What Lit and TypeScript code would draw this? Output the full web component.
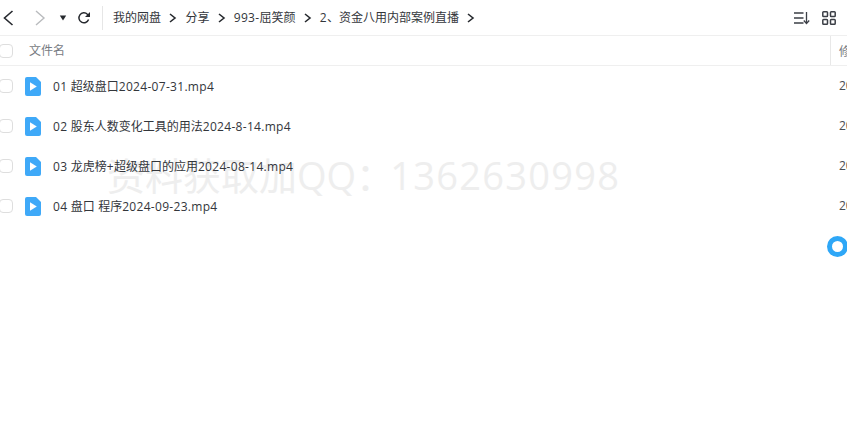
import { LitElement, html, css, svg } from "lit";
import { customElement } from "lit/decorators.js";

const FILES = [
  "01 超级盘口2024-07-31.mp4",
  "02 股东人数变化工具的用法2024-8-14.mp4",
  "03 龙虎榜+超级盘口的应用2024-08-14.mp4",
  "04 盘口 程序2024-09-23.mp4",
];
const CRUMBS = ["我的网盘", "分享", "993-屈笑颜", "2、资金八用内部案例直播"];

const chevron = svg`<svg class="crumb-arrow" width="10" height="10" viewBox="0 0 10 10"><path d="M2 1l5 4-5 4" fill="none" stroke="#26292e" stroke-width="1.6"/></svg>`;

/** Latin runs are a little wider than the stock font; wrap them so only they get tracking. */
const spaced = (text: string) =>
  text
    .split(/([\x20-\x7e]+)/)
    .filter(Boolean)
    .map((part) =>
      /^[\x20-\x7e]/.test(part) ? html`<span class="latin">${part}</span>` : part
    );

@customElement("app-root")
export class AppRoot extends LitElement {
  static styles = css`
    :host {
      display: block;
      position: relative;
      width: 847px;
      height: 424px;
      overflow: hidden;
      background: #fff;
      font-family: "Open Sans", "Noto Sans CJK SC", sans-serif;
      font-size: 12px;
      color: #33363b;
    }
    .latin { letter-spacing: 0.3px; white-space: pre; }
    .content { position: relative; z-index: 1; }
    .toolbar {
      display: flex;
      align-items: center;
      height: 35px;
      border-bottom: 1px solid #efefef;
    }
    .nav {
      display: flex;
      align-items: center;
      width: 103px;
      height: 24px;
      flex: none;
      border-right: 1px solid #e6e6e6;
      box-sizing: border-box;
      padding-left: 2px;
    }
    .nav svg { display: block; flex: none; }
    .fwd { margin-left: 20px; }
    .drop { margin-left: 13px; }
    .reload { margin-left: 10px; }
    .crumbs {
      display: flex;
      align-items: center;
      flex: 1;
      padding: 0 0 2px 10px;
      white-space: nowrap;
    }
    .crumb-arrow { margin: 2px 7.2px 0; flex: none; }
    .tools {
      display: flex;
      align-items: center;
      gap: 12px;
      padding-right: 11px;
    }
    .tools svg { display: block; }
    .head {
      display: flex;
      align-items: center;
      height: 29px;
      border-bottom: 1px solid #efefef;
      color: #777b82;
    }
    .check {
      width: 12px;
      height: 12px;
      flex: none;
      margin-left: -1px;
      border: 1px solid #dedede;
      border-radius: 4px;
      background: #fff;
    }
    .name-head { margin-left: 16px; flex: 1; padding-bottom: 1px; }
    .date-head {
      align-self: stretch;
      width: 17px;
      flex: none;
      border-left: 1px solid #e8e8e8;
      padding-left: 8px;
      display: flex;
      align-items: center;
      box-sizing: border-box;
      white-space: nowrap;
      overflow: hidden;
    }
    .row {
      display: flex;
      align-items: center;
      height: 40px;
    }
    .icon { margin-left: 12px; flex: none; display: block; }
    .name { margin-left: 12px; flex: 1; white-space: nowrap; padding-bottom: 1px; }
    .date {
      width: 8px;
      flex: none;
      overflow: hidden;
      color: #4a4d52;
      padding-bottom: 1px;
    }
    .watermark {
      position: absolute;
      left: 107px;
      top: 150px;
      font-size: 38px;
      line-height: 50px;
      color: #eeeeee;
      white-space: nowrap;
      pointer-events: none;
    }
    .wm-digits { letter-spacing: 1.3px; margin-left: -4px; }
    .ring {
      position: absolute;
      z-index: 1;
      left: 827px;
      top: 236px;
      width: 21px;
      height: 21px;
      box-sizing: border-box;
      border: 5px solid #2ea7f7;
      border-radius: 50%;
      background: #fff;
    }
  `;

  render() {
    return html`
      <div class="watermark">资料获取加QQ：<span class="wm-digits">1362630998</span></div>
      <div class="content">
        <div class="toolbar">
          <div class="nav">
            <svg width="12" height="16" viewBox="0 0 12 16"><path d="M10.500 1L2.500 8l8 7" fill="none" stroke="#26292e" stroke-width="1.600"/></svg>
            <svg class="fwd" width="12" height="16" viewBox="0 0 12 16"><path d="M2 1l8 7-8 7" fill="none" stroke="#b9bbbe" stroke-width="1.400"/></svg>
            <svg class="drop" width="8" height="6" viewBox="0 0 8 6"><path d="M.8.5h6.400L4 5.500z" fill="#26292e"/></svg>
            <svg class="reload" width="14" height="14" viewBox="0 0 14 14"><path d="M11.600 8.600A5 5 0 1 1 10.400 3.200L12 4.600" fill="none" stroke="#26292e" stroke-width="1.500"/><path d="M13 1v5H8z" fill="#26292e"/></svg>
          </div>
          <div class="crumbs">
            ${CRUMBS.map((c) => html`<span>${spaced(c)}</span>${chevron}`)}
          </div>
          <div class="tools">
            <svg width="17" height="14" viewBox="0 0 17 14"><path d="M1 2h9.500M1 7h9.500M1 12h9.500" stroke="#3b3f46" stroke-width="1.300"/><path d="M13.500 1v11" stroke="#3b3f46" stroke-width="1.300"/><path d="M10.800 9.500l2.700 3 2.700-3" fill="none" stroke="#3b3f46" stroke-width="1.300"/></svg>
            <svg width="14" height="14" viewBox="0 0 14 14"><g fill="none" stroke="#3b3f46" stroke-width="1.500"><rect x=".8" y=".8" width="4.700" height="4.700" rx=".8"/><rect x="8.500" y=".8" width="4.700" height="4.700" rx=".8"/><rect x=".8" y="8.500" width="4.700" height="4.700" rx=".8"/><rect x="8.500" y="8.500" width="4.700" height="4.700" rx=".8"/></g></svg>
          </div>
        </div>
        <div class="head">
          <div class="check"></div>
          <div class="name-head">文件名</div>
          <div class="date-head">修改时间</div>
        </div>
        ${FILES.map(
          (f) => html`
            <div class="row">
              <div class="check"></div>
              <svg class="icon" width="16" height="19" viewBox="0 0 16 19">
                <path d="M2 0h9l5 5v12a2 2 0 0 1-2 2H2a2 2 0 0 1-2-2V2a2 2 0 0 1 2-2z" fill="#3fa9f8"/>
                <path d="M5 5.300v8.400l6.800-4.200z" fill="#fff"/>
              </svg>
              <div class="name">${spaced(f)}</div>
              <div class="date">2024</div>
            </div>
          `
        )}
      </div>
      <div class="ring"></div>
    `;
  }
}
